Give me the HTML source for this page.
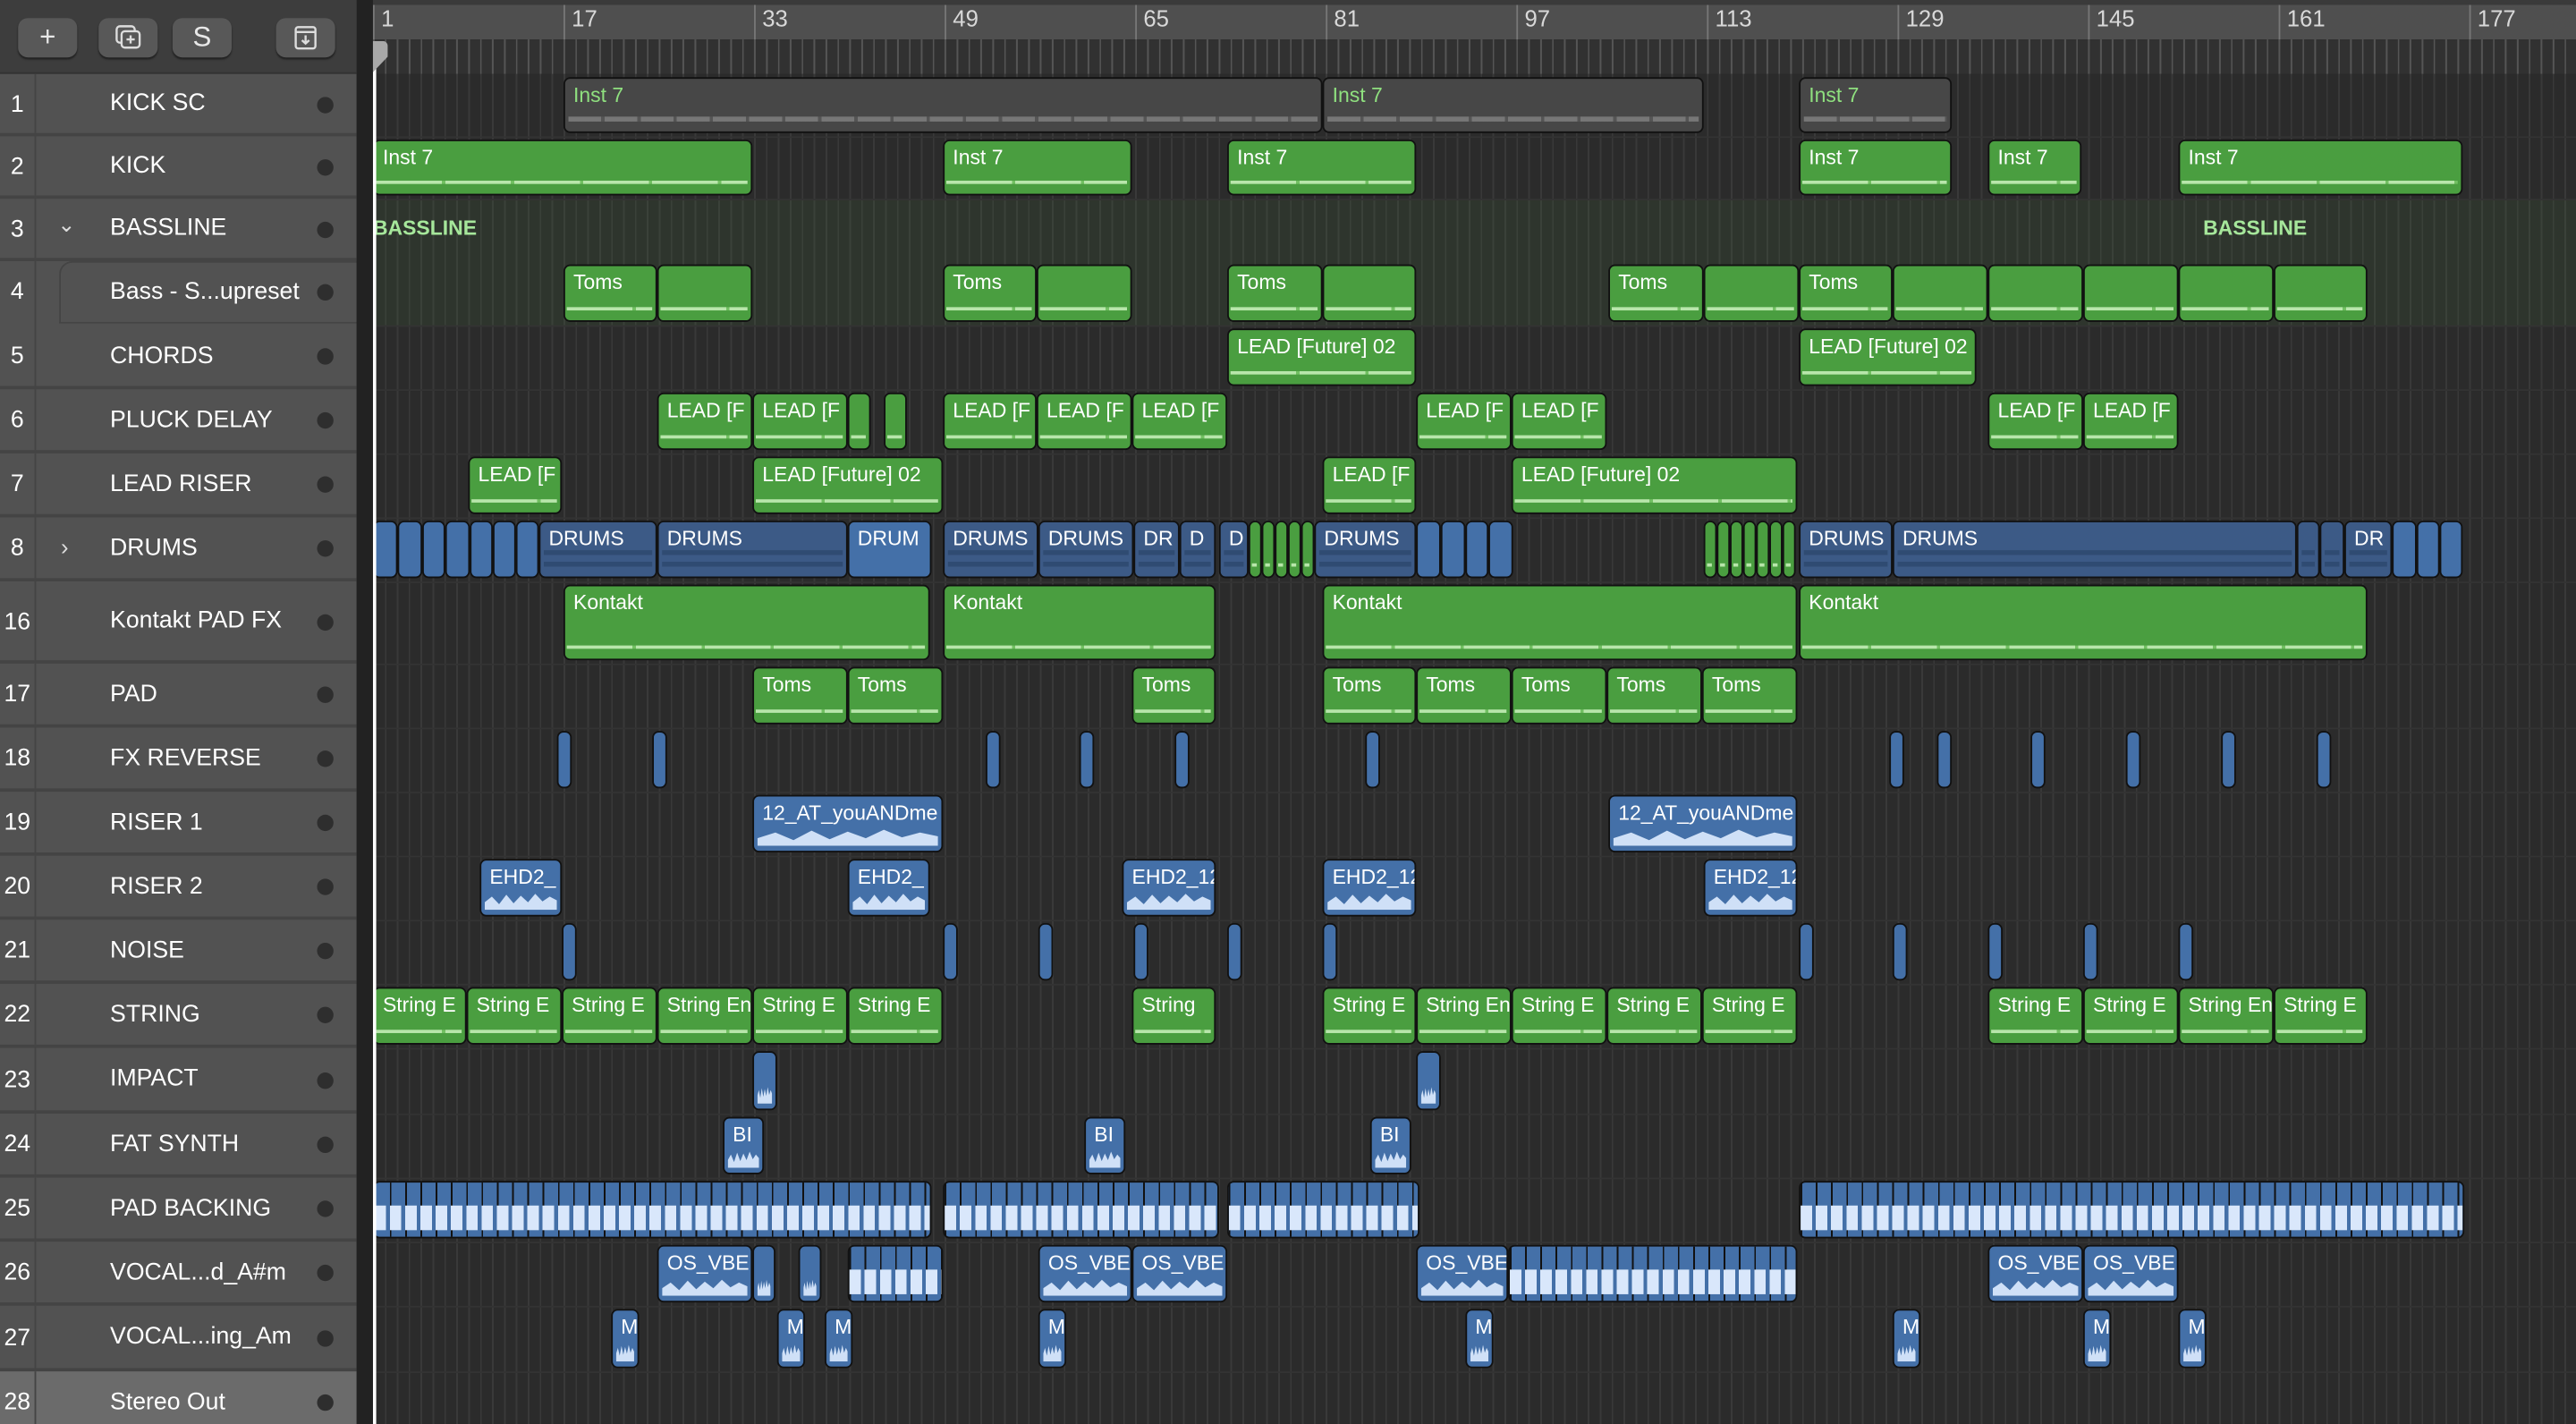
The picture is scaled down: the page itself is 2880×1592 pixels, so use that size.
<!DOCTYPE html>
<html><head><meta charset="utf-8"><style>
*{margin:0;padding:0;box-sizing:border-box}
html,body{width:2880px;height:1592px;overflow:hidden;background:#2b2b2b;font-family:"Liberation Sans",sans-serif}
#s{position:absolute;left:0;top:0;width:1568px;height:867px;transform:scale(1.83674,1.8362);transform-origin:0 0;background:#2b2b2b;overflow:hidden}
.lp{position:absolute;left:0;top:0;width:217px;height:867px;background:#525252}
.hdr{position:absolute;left:0;top:0;width:217px;height:45px;background:#3d3d3d;border-bottom:1px solid #333}
.btn{position:absolute;top:11px;width:36px;height:24px;background:#585858;border-radius:6px;color:#e8e8e8;text-align:center;font-size:17px;line-height:24px;box-shadow:0 1px 1px #222}
.tr{position:absolute;left:0;width:217px;border-bottom:2px solid #444;color:#fff;font-size:14.5px}
.tr .n{position:absolute;left:0;width:22px;text-align:center;border-right:1px solid #444;height:100%}
.tr .nm{position:absolute;left:67px}
.tr .d{position:absolute;left:193px;width:10px;height:10px;border-radius:50%;background:#2e2e2e}
.sep{position:absolute;left:217px;top:0;width:10px;height:867px;background:#222}
.ar{position:absolute;left:227px;top:45px;width:1341px;height:822px;background-color:#2b2b2b;background-image:repeating-linear-gradient(90deg,#393939 0 1px,transparent 1px 7.25px)}
.rl{position:absolute;left:217px;top:0;width:1351px;height:24px;background:#4f4f4f;border-top:3px solid #3a3a3a}
.rl2{position:absolute;left:217px;top:24px;width:1351px;height:21px;background:#313131;background-image:repeating-linear-gradient(90deg,#555 0 1px,transparent 1px 7.25px);background-position:10px 0}
.num{position:absolute;top:3px;color:#d8d8d8;font-size:14px;padding-left:4px;border-left:1px solid #777;height:21px}
.hl{position:absolute;left:227px;width:1341px;height:1px;background:#333}
.row{position:absolute;left:0;width:1568px}
.r{position:absolute;top:2px;bottom:2px;border:1.5px solid #111;border-radius:4px;color:#fff;font-size:12.5px;padding:3px 0 0 5px;white-space:nowrap;overflow:hidden}
.g{background:#4a9e40}
.g::after{content:"";position:absolute;left:1px;right:2px;bottom:6px;height:2px;background:repeating-linear-gradient(90deg,#b8e6ab 0 40px,#72c062 40px 42px)}
.gy{background:#474747;color:#8fe07f}
.gy::after{content:"";position:absolute;left:2px;right:2px;bottom:6px;height:3px;background:repeating-linear-gradient(90deg,#777 0 20px,#555 20px 22px)}
.b{background:#4470a8}
.bd{background:#3c5a86}
.bd::after{content:"";position:absolute;left:2px;right:2px;top:50%;height:40%;background:repeating-linear-gradient(180deg,#2f4b72 0 3px,transparent 3px 7px)}
.w::after{content:"";position:absolute;left:2px;right:2px;bottom:3px;height:35%;background:#cfe0f7;clip-path:polygon(0 60%,10% 30%,20% 70%,30% 20%,40% 65%,50% 25%,60% 60%,70% 15%,80% 55%,90% 30%,100% 50%,100% 100%,0 100%)}
.st{background:#4470a8;background-image:repeating-linear-gradient(90deg,#111 0 1px,transparent 1px 9.3px)}
.st::after{content:"";position:absolute;left:0;right:0;bottom:4px;height:45%;background:repeating-linear-gradient(90deg,#d9e7fb 0 7px,#4470a8 7px 9.3px)}
.fold{position:absolute;left:227px;top:121px;width:1341px;height:77px;background:rgba(70,120,60,0.13)}
.bl{position:absolute;color:#a6e79b;font-weight:bold;font-size:12.5px}
</style></head><body><div id="s">
<div class="ar"></div>
<div class="fold"></div>
<div class="rl"></div><div class="rl2"></div>
<div class="num" style="left:227px">1</div><div class="num" style="left:343px">17</div><div class="num" style="left:459px">33</div><div class="num" style="left:575px">49</div><div class="num" style="left:691px">65</div><div class="num" style="left:807px">81</div><div class="num" style="left:923px">97</div><div class="num" style="left:1039px">113</div><div class="num" style="left:1155px">129</div><div class="num" style="left:1271px">145</div><div class="num" style="left:1387px">161</div><div class="num" style="left:1503px">177</div>
<div class="hl" style="top:83px"></div><div class="hl" style="top:121px"></div><div class="hl" style="top:198px"></div><div class="hl" style="top:237px"></div><div class="hl" style="top:276px"></div><div class="hl" style="top:315px"></div><div class="hl" style="top:354px"></div><div class="hl" style="top:404px"></div><div class="hl" style="top:443px"></div><div class="hl" style="top:482px"></div><div class="hl" style="top:521px"></div><div class="hl" style="top:560px"></div><div class="hl" style="top:599px"></div><div class="hl" style="top:638px"></div><div class="hl" style="top:678px"></div><div class="hl" style="top:717px"></div><div class="hl" style="top:756px"></div><div class="hl" style="top:795px"></div><div class="hl" style="top:835px"></div>
<div class="bl" style="left:227px;top:132px">BASSLINE</div><div class="bl" style="left:1341px;top:132px">BASSLINE</div>

<div class="row" style="top:45px;height:38px">
<div class="r gy" style="left:343px;width:462px">Inst 7</div><div class="r gy" style="left:805px;width:232px">Inst 7</div><div class="r gy" style="left:1095px;width:93px">Inst 7</div></div>
<div class="row" style="top:83px;height:38px">
<div class="r g" style="left:227px;width:231px">Inst 7</div><div class="r g" style="left:574px;width:115px">Inst 7</div><div class="r g" style="left:747px;width:115px">Inst 7</div><div class="r g" style="left:1095px;width:93px">Inst 7</div><div class="r g" style="left:1210px;width:57px">Inst 7</div><div class="r g" style="left:1326px;width:173px">Inst 7</div></div>
<div class="row" style="top:159px;height:39px">
<div class="r g" style="left:343px;width:57px">Toms</div><div class="r g" style="left:400px;width:58px"></div>
<div class="r g" style="left:574px;width:57px">Toms</div><div class="r g" style="left:631px;width:58px"></div>
<div class="r g" style="left:747px;width:58px">Toms</div><div class="r g" style="left:805px;width:57px"></div>
<div class="r g" style="left:979px;width:58px">Toms</div><div class="r g" style="left:1037px;width:58px"></div>
<div class="r g" style="left:1095px;width:57px">Toms</div><div class="r g" style="left:1152px;width:58px"></div><div class="r g" style="left:1210px;width:58px"></div><div class="r g" style="left:1268px;width:58px"></div><div class="r g" style="left:1326px;width:58px"></div><div class="r g" style="left:1384px;width:57px"></div></div>
<div class="row" style="top:198px;height:39px">
<div class="r g" style="left:747px;width:115px">LEAD [Future] 02</div><div class="r g" style="left:1095px;width:108px">LEAD [Future] 02</div></div>
<div class="row" style="top:237px;height:39px">
<div class="r g" style="left:400px;width:58px">LEAD [F</div><div class="r g" style="left:458px;width:58px">LEAD [F</div><div class="r g" style="left:516px;width:14px"></div><div class="r g" style="left:538px;width:14px"></div><div class="r g" style="left:574px;width:57px">LEAD [F</div><div class="r g" style="left:631px;width:58px">LEAD [F</div><div class="r g" style="left:689px;width:58px">LEAD [F</div><div class="r g" style="left:862px;width:58px">LEAD [F</div><div class="r g" style="left:920px;width:58px">LEAD [F</div><div class="r g" style="left:1210px;width:58px">LEAD [F</div><div class="r g" style="left:1268px;width:58px">LEAD [F</div></div>
<div class="row" style="top:276px;height:39px">
<div class="r g" style="left:285px;width:57px">LEAD [F</div><div class="r g" style="left:458px;width:116px">LEAD [Future] 02</div><div class="r g" style="left:805px;width:57px">LEAD [F</div><div class="r g" style="left:920px;width:174px">LEAD [Future] 02</div></div>
<div class="row" style="top:315px;height:39px">
<div class="r b" style="left:227px;width:15px"></div><div class="r b" style="left:242px;width:15px"></div><div class="r b" style="left:257px;width:14px"></div><div class="r b" style="left:271px;width:15px"></div><div class="r b" style="left:286px;width:14px"></div><div class="r b" style="left:300px;width:14px"></div><div class="r b" style="left:314px;width:14px"></div>
<div class="r bd" style="left:328px;width:72px">DRUMS</div><div class="r bd" style="left:400px;width:116px">DRUMS</div><div class="r b" style="left:516px;width:51px">DRUM</div><div class="r bd" style="left:574px;width:58px">DRUMS</div><div class="r bd" style="left:632px;width:58px">DRUMS</div><div class="r bd" style="left:690px;width:28px">DR</div><div class="r bd" style="left:718px;width:22px">D</div><div class="r bd" style="left:742px;width:18px">D</div>
<div class="r g" style="left:760px;width:8px;padding:0"></div><div class="r g" style="left:768px;width:8px;padding:0"></div><div class="r g" style="left:776px;width:8px;padding:0"></div><div class="r g" style="left:784px;width:8px;padding:0"></div><div class="r g" style="left:792px;width:8px;padding:0"></div>
<div class="r bd" style="left:800px;width:62px">DRUMS</div><div class="r b" style="left:862px;width:15px"></div><div class="r b" style="left:877px;width:15px"></div><div class="r b" style="left:892px;width:14px"></div><div class="r b" style="left:906px;width:15px"></div>
<div class="r g" style="left:1037px;width:8px;padding:0"></div><div class="r g" style="left:1045px;width:8px;padding:0"></div><div class="r g" style="left:1053px;width:8px;padding:0"></div><div class="r g" style="left:1061px;width:8px;padding:0"></div><div class="r g" style="left:1069px;width:8px;padding:0"></div><div class="r g" style="left:1077px;width:8px;padding:0"></div><div class="r g" style="left:1085px;width:8px;padding:0"></div>
<div class="r bd" style="left:1095px;width:57px">DRUMS</div><div class="r bd" style="left:1152px;width:246px">DRUMS</div><div class="r bd" style="left:1398px;width:14px"></div><div class="r bd" style="left:1412px;width:15px"></div><div class="r bd" style="left:1427px;width:29px">DR</div><div class="r b" style="left:1456px;width:15px"></div><div class="r b" style="left:1471px;width:14px"></div><div class="r b" style="left:1485px;width:14px"></div></div>
<div class="row" style="top:354px;height:50px">
<div class="r g" style="left:343px;width:223px">Kontakt</div><div class="r g" style="left:574px;width:166px">Kontakt</div><div class="r g" style="left:805px;width:289px">Kontakt</div><div class="r g" style="left:1095px;width:346px">Kontakt</div></div>
<div class="row" style="top:404px;height:39px">
<div class="r g" style="left:458px;width:58px">Toms</div><div class="r g" style="left:516px;width:58px">Toms</div><div class="r g" style="left:689px;width:51px">Toms</div><div class="r g" style="left:805px;width:57px">Toms</div><div class="r g" style="left:862px;width:58px">Toms</div><div class="r g" style="left:920px;width:58px">Toms</div><div class="r g" style="left:978px;width:58px">Toms</div><div class="r g" style="left:1036px;width:58px">Toms</div></div>
<div class="row" style="top:443px;height:39px">
<div class="r b" style="left:339px;width:9px"></div><div class="r b" style="left:397px;width:9px"></div><div class="r b" style="left:600px;width:9px"></div><div class="r b" style="left:657px;width:9px"></div><div class="r b" style="left:715px;width:9px"></div><div class="r b" style="left:831px;width:9px"></div><div class="r b" style="left:1150px;width:9px"></div><div class="r b" style="left:1179px;width:9px"></div><div class="r b" style="left:1236px;width:9px"></div><div class="r b" style="left:1294px;width:9px"></div><div class="r b" style="left:1352px;width:9px"></div><div class="r b" style="left:1410px;width:9px"></div></div>
<div class="row" style="top:482px;height:39px">
<div class="r b w" style="left:458px;width:116px">12_AT_youANDme</div><div class="r b w" style="left:979px;width:115px">12_AT_youANDme</div></div>
<div class="row" style="top:521px;height:39px">
<div class="r b w" style="left:292px;width:50px">EHD2_</div><div class="r b w" style="left:516px;width:50px">EHD2_</div><div class="r b w" style="left:683px;width:57px">EHD2_12</div><div class="r b w" style="left:805px;width:57px">EHD2_12</div><div class="r b w" style="left:1037px;width:57px">EHD2_12</div></div>
<div class="row" style="top:560px;height:39px">
<div class="r b" style="left:342px;width:9px"></div><div class="r b" style="left:574px;width:9px"></div><div class="r b" style="left:632px;width:9px"></div><div class="r b" style="left:690px;width:9px"></div><div class="r b" style="left:747px;width:9px"></div><div class="r b" style="left:805px;width:9px"></div><div class="r b" style="left:1095px;width:9px"></div><div class="r b" style="left:1152px;width:9px"></div><div class="r b" style="left:1210px;width:9px"></div><div class="r b" style="left:1268px;width:9px"></div><div class="r b" style="left:1326px;width:9px"></div></div>
<div class="row" style="top:599px;height:39px">
<div class="r g" style="left:227px;width:57px">String E</div><div class="r g" style="left:284px;width:58px">String E</div><div class="r g" style="left:342px;width:58px">String E</div><div class="r g" style="left:400px;width:58px">String En</div><div class="r g" style="left:458px;width:58px">String E</div><div class="r g" style="left:516px;width:58px">String E</div><div class="r g" style="left:689px;width:51px">String</div><div class="r g" style="left:805px;width:57px">String E</div><div class="r g" style="left:862px;width:58px">String En</div><div class="r g" style="left:920px;width:58px">String E</div><div class="r g" style="left:978px;width:58px">String E</div><div class="r g" style="left:1036px;width:58px">String E</div><div class="r g" style="left:1210px;width:58px">String E</div><div class="r g" style="left:1268px;width:58px">String E</div><div class="r g" style="left:1326px;width:58px">String En</div><div class="r g" style="left:1384px;width:57px">String E</div></div>
<div class="row" style="top:638px;height:40px">
<div class="r b w" style="left:458px;width:15px"></div><div class="r b w" style="left:862px;width:15px"></div></div>
<div class="row" style="top:678px;height:39px">
<div class="r b w" style="left:440px;width:25px">BI</div><div class="r b w" style="left:660px;width:25px">BI</div><div class="r b w" style="left:834px;width:25px">BI</div></div>
<div class="row" style="top:717px;height:39px">
<div class="r st" style="left:227px;width:340px;padding:0"></div><div class="r st" style="left:574px;width:168px;padding:0"></div><div class="r st" style="left:747px;width:117px;padding:0"></div><div class="r st" style="left:1095px;width:405px;padding:0"></div></div>
<div class="row" style="top:756px;height:39px">
<div class="r b w" style="left:400px;width:58px">OS_VBE</div><div class="r b w" style="left:458px;width:14px"></div><div class="r b w" style="left:486px;width:14px"></div><div class="r st" style="left:516px;width:58px;padding:0"></div><div class="r b w" style="left:632px;width:57px">OS_VBE</div><div class="r b w" style="left:689px;width:58px">OS_VBE</div><div class="r b w" style="left:862px;width:56px">OS_VBE</div><div class="r st" style="left:918px;width:176px;padding:0"></div><div class="r b w" style="left:1210px;width:58px">OS_VBE</div><div class="r b w" style="left:1268px;width:58px">OS_VBE</div></div>
<div class="row" style="top:795px;height:40px">
<div class="r b w" style="left:372px;width:17px">M</div><div class="r b w" style="left:473px;width:17px">M</div><div class="r b w" style="left:502px;width:17px">M</div><div class="r b w" style="left:632px;width:17px">M</div><div class="r b w" style="left:892px;width:17px">M</div><div class="r b w" style="left:1152px;width:17px">M</div><div class="r b w" style="left:1268px;width:17px">M</div><div class="r b w" style="left:1326px;width:17px">M</div></div>

<div style="position:absolute;left:227px;top:30px;width:1.5px;height:837px;background:#fff"></div>
<div style="position:absolute;left:218px;top:25px;width:18px;height:19px;background:#a8a8a8;border-radius:3px 3px 0 0;clip-path:polygon(0 0,100% 0,100% 50%,50% 100%,0 50%)"></div>

<div class="sep"></div>
<div class="lp">
<div class="hdr">
<div class="btn" style="left:11px">+</div>
<div class="btn" style="left:60px"><svg width="18" height="16" viewBox="0 0 18 16" style="margin-top:4px"><rect x="2" y="1" width="11" height="10" rx="2" fill="none" stroke="#ddd" stroke-width="1.3"/><rect x="5" y="4" width="11" height="10" rx="2" fill="#585858" stroke="#ddd" stroke-width="1.3"/><path d="M10.5 6.5v5M8 9h5" stroke="#ddd" stroke-width="1.3"/></svg></div>
<div class="btn" style="left:105px">S</div>
<div class="btn" style="left:168px"><svg width="16" height="16" viewBox="0 0 16 16" style="margin-top:4px"><rect x="2" y="1.5" width="12" height="13" rx="1.5" fill="none" stroke="#ddd" stroke-width="1.3"/><path d="M2 4.5h12M8 6.5v5M5.8 9.5L8 11.5l2.2-2" fill="none" stroke="#ddd" stroke-width="1.3"/></svg></div>
</div>
<div class="tr" style="top:45px;height:38px"><div class="n" style="line-height:38px">1</div><div class="nm" style="top:10px">KICK SC</div><div class="d" style="top:14px"></div></div>
<div class="tr" style="top:83px;height:38px"><div class="n" style="line-height:38px">2</div><div class="nm" style="top:10px">KICK</div><div class="d" style="top:14px"></div></div>
<div class="tr" style="top:121px;height:38px"><div class="n" style="line-height:38px">3</div><div style="position:absolute;left:35px;top:8px;color:#ddd;font-size:13px">&#8964;</div><div class="nm" style="top:10px">BASSLINE</div><div class="d" style="top:14px"></div></div>
<div class="tr" style="top:159px;height:39px;border-bottom:none"><div class="n" style="line-height:39px">4</div><div style="position:absolute;left:36px;top:0;width:181px;height:38px;border:1px solid #444;border-right:none;border-radius:8px 0 0 0"></div><div class="nm" style="top:11px">Bass - S...upreset</div><div class="d" style="top:14px"></div></div>
<div class="tr" style="top:198px;height:39px"><div class="n" style="line-height:39px">5</div><div class="nm" style="top:11px">CHORDS</div><div class="d" style="top:14px"></div></div>
<div class="tr" style="top:237px;height:39px"><div class="n" style="line-height:39px">6</div><div class="nm" style="top:11px">PLUCK DELAY</div><div class="d" style="top:14px"></div></div>
<div class="tr" style="top:276px;height:39px"><div class="n" style="line-height:39px">7</div><div class="nm" style="top:11px">LEAD RISER</div><div class="d" style="top:14px"></div></div>
<div class="tr" style="top:315px;height:39px"><div class="n" style="line-height:39px">8</div><div style="position:absolute;left:37px;top:10px;color:#ddd;font-size:14px">&#8250;</div><div class="nm" style="top:11px">DRUMS</div><div class="d" style="top:14px"></div></div>
<div class="tr" style="top:354px;height:50px"><div class="n" style="line-height:50px">16</div><div class="nm" style="top:16px">Kontakt PAD FX</div><div class="d" style="top:20px"></div></div>
<div class="tr" style="top:404px;height:39px"><div class="n" style="line-height:39px">17</div><div class="nm" style="top:11px">PAD</div><div class="d" style="top:14px"></div></div>
<div class="tr" style="top:443px;height:39px"><div class="n" style="line-height:39px">18</div><div class="nm" style="top:11px">FX REVERSE</div><div class="d" style="top:14px"></div></div>
<div class="tr" style="top:482px;height:39px"><div class="n" style="line-height:39px">19</div><div class="nm" style="top:11px">RISER 1</div><div class="d" style="top:14px"></div></div>
<div class="tr" style="top:521px;height:39px"><div class="n" style="line-height:39px">20</div><div class="nm" style="top:11px">RISER 2</div><div class="d" style="top:14px"></div></div>
<div class="tr" style="top:560px;height:39px"><div class="n" style="line-height:39px">21</div><div class="nm" style="top:11px">NOISE</div><div class="d" style="top:14px"></div></div>
<div class="tr" style="top:599px;height:39px"><div class="n" style="line-height:39px">22</div><div class="nm" style="top:11px">STRING</div><div class="d" style="top:14px"></div></div>
<div class="tr" style="top:638px;height:40px"><div class="n" style="line-height:40px">23</div><div class="nm" style="top:11px">IMPACT</div><div class="d" style="top:15px"></div></div>
<div class="tr" style="top:678px;height:39px"><div class="n" style="line-height:39px">24</div><div class="nm" style="top:11px">FAT SYNTH</div><div class="d" style="top:14px"></div></div>
<div class="tr" style="top:717px;height:39px"><div class="n" style="line-height:39px">25</div><div class="nm" style="top:11px">PAD BACKING</div><div class="d" style="top:14px"></div></div>
<div class="tr" style="top:756px;height:39px"><div class="n" style="line-height:39px">26</div><div class="nm" style="top:11px">VOCAL...d_A#m</div><div class="d" style="top:14px"></div></div>
<div class="tr" style="top:795px;height:40px"><div class="n" style="line-height:40px">27</div><div class="nm" style="top:11px">VOCAL...ing_Am</div><div class="d" style="top:15px"></div></div>
<div class="tr" style="top:835px;height:40px;background:#6b6b6b;border-bottom:none"><div class="n" style="line-height:38px">28</div><div class="nm" style="top:11px">Stereo Out</div><div class="d" style="top:14px"></div></div>
</div>
</div></body></html>
